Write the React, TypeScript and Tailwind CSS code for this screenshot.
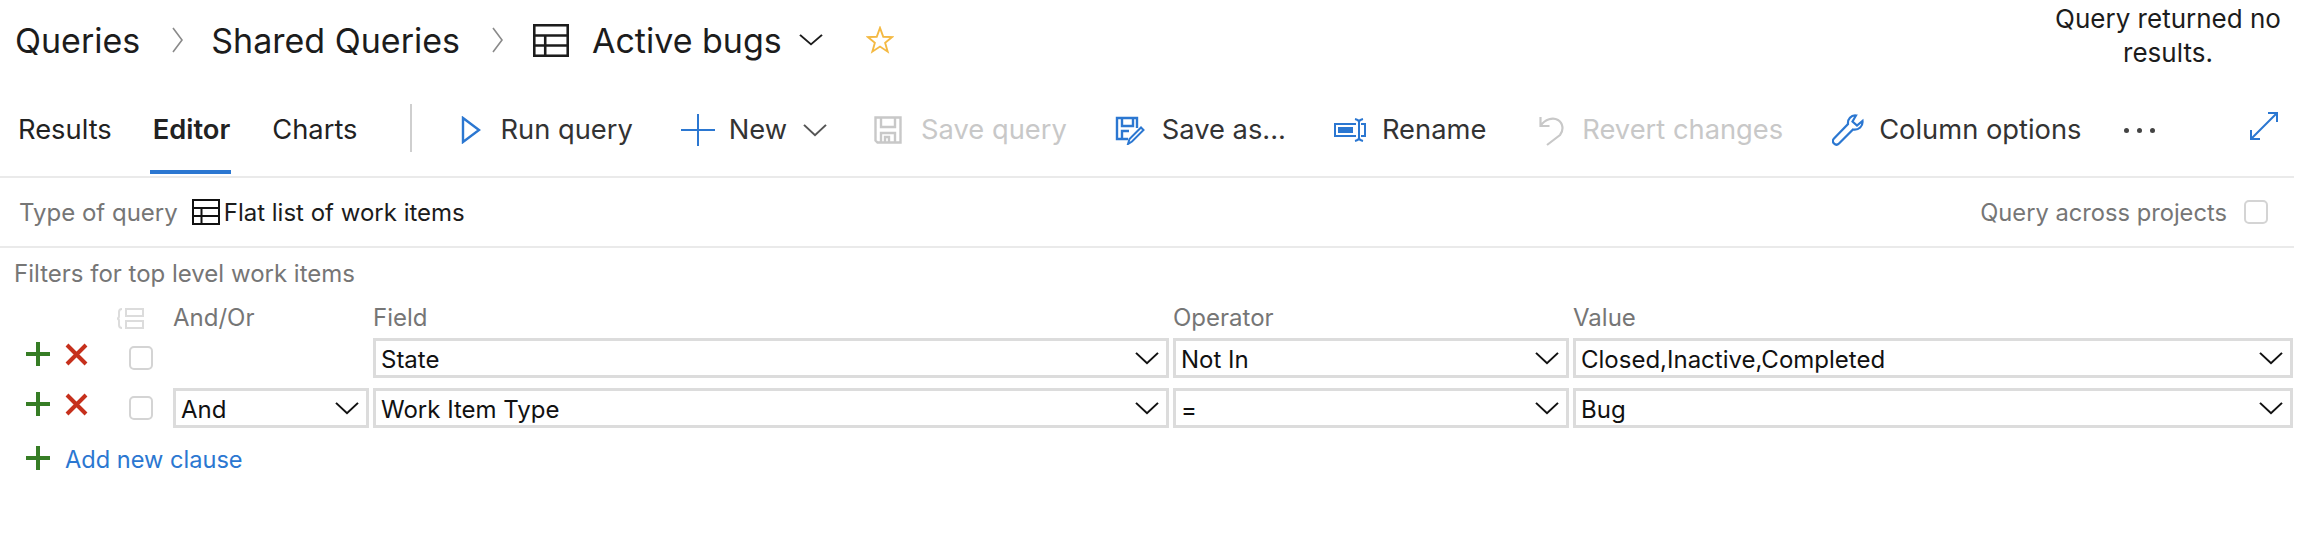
import React from 'react'

const blue = '#2b77d1'

function GridIcon({ className }: { className: string }) {
    return (
        <svg viewBox="0 0 28 26" preserveAspectRatio="none" className={className} fill="none" stroke="currentColor" strokeWidth="2">
            <rect x="1" y="1" width="26" height="24" />
            <path d="M1 9H27M1 17H27M9.5 9V25" />
        </svg>
    )
}

function Chevron({ className }: { className: string }) {
    return (
        <svg viewBox="0 0 24 14" preserveAspectRatio="none" className={className} fill="none" stroke="currentColor" strokeWidth="2">
            <path d="M1 1L12 12L23 1" />
        </svg>
    )
}

function Crumb({ className }: { className: string }) {
    return (
        <svg viewBox="0 0 13 26" className={className} fill="none" stroke="#8a8a8a" strokeWidth="1.6">
            <path d="M2 1L11 13L2 25" />
        </svg>
    )
}

function Plus({ className = '' }: { className?: string }) {
    return (
        <svg viewBox="0 0 24 24" className={`h-6 w-6 shrink-0 ${className}`} fill="none" stroke="#367d25" strokeWidth="4">
            <path d="M12 0V24M0 12H24" />
        </svg>
    )
}

function Cross({ className = '' }: { className?: string }) {
    return (
        <svg viewBox="0 0 23 23" className={`h-[23px] w-[23px] shrink-0 ${className}`} fill="none" stroke="#c6301c" strokeWidth="4">
            <path d="M2 2L21 21M21 2L2 21" />
        </svg>
    )
}

function Checkbox({ className = '' }: { className?: string }) {
    return <div className={`h-6 w-6 shrink-0 rounded-[5px] border-2 border-[#d4d4d4] bg-white ${className}`} />
}

function Select({ value, className }: { value: string; className: string }) {
    return (
        <div className={`flex h-10 items-center justify-between border-[3px] border-[#dcdcdc] bg-white pl-[5px] pr-[7px] text-[#111] ${className}`}>
            <span className="pt-[3px]">{value}</span>
            <Chevron className="h-[13px] w-[24px] text-[#111]" />
        </div>
    )
}

function Tool({ icon, label, disabled, className = '' }: { icon: React.ReactNode; label: string; disabled?: boolean; className?: string }) {
    return (
        <div className={`flex items-center ${disabled ? 'text-[#c8c8c8]' : 'text-[#333]'} ${className}`}>
            {icon}
            <span>{label}</span>
        </div>
    )
}

function FilterRow({ andOr, field, operator, value }: { andOr?: string; field: string; operator: string; value: string }) {
    return (
        <div className="flex h-10 items-center">
            <Plus className="ml-[26px] -mt-[8px]" />
            <Cross className="ml-[15px] -mt-[8px]" />
            <Checkbox className="ml-[41px]" />
            {andOr ? <Select value={andOr} className="ml-[20px] w-[196px]" /> : <div className="ml-[20px] w-[196px]" />}
            <Select value={field} className="ml-[4px] w-[796px]" />
            <Select value={operator} className="ml-[4px] w-[396px]" />
            <Select value={value} className="ml-[4px] w-[720px]" />
        </div>
    )
}

export default function App() {
    return (
        <div className="h-[534px] w-[2322px] overflow-hidden bg-white font-['Inter',sans-serif]">
            {/* header */}
            <div className="flex h-[76px] items-start justify-between pr-[34px]">
                <div className="flex h-[80px] items-center text-[34px] text-[#1c1c1c]">
                    <span className="ml-[15px]">Queries</span>
                    <Crumb className="ml-[31px] h-[26px] w-[13px]" />
                    <span className="ml-[27px]">Shared Queries</span>
                    <Crumb className="ml-[31px] h-[26px] w-[13px]" />
                    <GridIcon className="ml-[29px] h-[33px] w-[36px]" />
                    <span className="ml-[23px]">Active bugs</span>
                    <Chevron className="ml-[17px] h-[12px] w-[24px]" />
                    <svg viewBox="0 0 30 30" className="ml-[43px] h-[28px] w-[28px]" fill="none" stroke="#f4b942" strokeWidth="2">
                        <path d="M15 2L18.5 11.5L28 11.8L20.5 18L23.2 27.5L15 22L6.8 27.5L9.5 18L2 11.8L11.5 11.5Z" />
                    </svg>
                </div>
                <div className="mt-[2px] w-[240px] text-center text-[26px] leading-[34px] text-[#1c1c1c]">Query returned no results.</div>
            </div>

            {/* toolbar */}
            <div className="mr-[28px] flex h-[102px] items-center border-b-[2px] border-[#eaeaea] pt-[8px] text-[27.3px]">
                <div className="flex h-full items-center text-[#222]">
                    <span className="ml-[18px]">Results</span>
                    <div className="relative ml-[41px] flex h-full items-center font-semibold">
                        Editor
                        <div className="absolute -left-[3px] -right-[1px] bottom-[2px] h-1 bg-[#2b77d1]" />
                    </div>
                    <span className="ml-[42px]">Charts</span>
                </div>
                <div className="ml-[53px] -mt-[4px] h-12 w-[2px] bg-[#cfcfcf]" />
                <Tool
                    className="ml-[49px]"
                    label="Run query"
                    icon={
                        <svg viewBox="0 0 20 28" className="mr-[19px] h-[28px] w-[20px]" fill="none" stroke={blue} strokeWidth="2.4">
                            <path d="M2 2L18 14L2 26Z" />
                        </svg>
                    }
                />
                <Tool
                    className="ml-[48px]"
                    label="New"
                    icon={
                        <svg viewBox="0 0 34 32" className="mr-[14px] h-[32px] w-[34px]" fill="none" stroke={blue} strokeWidth="2">
                            <path d="M17 0V32M0 16H34" />
                        </svg>
                    }
                />
                <Chevron className="ml-[16px] h-[13px] w-[24px] text-[#555]" />
                <Tool
                    disabled
                    className="ml-[47px]"
                    label="Save query"
                    icon={
                        <svg viewBox="0 0 28 28" className="mr-[19px] h-[28px] w-[28px]" fill="none" stroke="#c8c8c8" strokeWidth="2.4">
                            <path d="M1.5 1.5H26.5V26.5H3.5L1.5 24.5ZM7 1.5V11H21V1.5M7 26.5V17H21V26.5M11 26.5V21H15V26.5" />
                        </svg>
                    }
                />
                <Tool
                    className="ml-[48px]"
                    label="Save as..."
                    icon={
                        <svg viewBox="0 0 30 29" className="mr-[17px] h-[29px] w-[30px]" fill="none" stroke={blue} strokeWidth="2.4">
                            <path d="M13 23H2V2H22V12M7 2V10H18V2M7 23V15H14" />
                            <path d="M13 28L14.5 23L26 11.5L28.5 14L17 25.5Z" strokeWidth="2" />
                        </svg>
                    }
                />
                <Tool
                    className="ml-[48px]"
                    label="Rename"
                    icon={
                        <svg viewBox="0 0 32 24" className="mr-[16px] h-[24px] w-[32px]" fill="none" stroke={blue} strokeWidth="2">
                            <path d="M22 6H1V18H22M27 6H31V18H27" />
                            <rect x="5" y="10" width="13" height="4" fill={blue} />
                            <path d="M21 1Q25 2 25 4V20Q25 22 21 23M29 1Q25 2 25 4M25 20Q25 22 29 23" />
                        </svg>
                    }
                />
                <Tool
                    disabled
                    className="ml-[53px]"
                    label="Revert changes"
                    icon={
                        <svg viewBox="0 0 25 31" className="mr-[18px] h-[31px] w-[25px]" fill="none" stroke="#c8c8c8" strokeWidth="2.2">
                            <path d="M1.5 2V11H10.5M1.5 11C6 4 14 2 19 5C24 8 25 15 21 20L8 30" />
                        </svg>
                    }
                />
                <Tool
                    className="ml-[49px]"
                    label="Column options"
                    icon={
                        <svg viewBox="0 0 32 32" className="mr-[15px] h-[32px] w-[32px]" fill="none" stroke={blue} strokeWidth="2.2">
                            <path d="M24 1.5C19 1 15.5 5 16 10L2 24.5C0.5 26 0.5 28 2 29.5C3.5 31 5.5 31 7 29.5L21 15.5C27 16.5 31 12 30.5 7L25 11.5L20.5 7.5Z" />
                        </svg>
                    }
                />
                <div className="ml-[43px] flex gap-[8px]">
                    <div className="h-[5px] w-[5px] rounded-full bg-[#444]" />
                    <div className="h-[5px] w-[5px] rounded-full bg-[#444]" />
                    <div className="h-[5px] w-[5px] rounded-full bg-[#444]" />
                </div>
                <svg viewBox="0 0 28 28" className="ml-auto mr-[16px] -mt-[8px] h-[28px] w-[28px]" fill="none" stroke={blue} strokeWidth="2">
                    <path d="M1 27L27 1M18 1H27V10M1 18V27H10" />
                </svg>
            </div>

            {/* type of query */}
            <div className="mr-[28px] flex h-[70px] items-center border-b-[2px] border-[#eaeaea] text-[24px]">
                <span className="ml-[19px] pt-[2px] text-[#767676]">Type of query</span>
                <GridIcon className="ml-[14px] h-[26px] w-7 text-[#111]" />
                <span className="ml-[4px] pt-[2px] text-[#1c1c1c]">Flat list of work items</span>
                <span className="ml-auto pt-[2px] text-[23.7px] text-[#767676]">Query across projects</span>
                <Checkbox className="ml-[17px] mr-[26px]" />
            </div>

            {/* filters */}
            <div className="pt-[13px] text-[24px]">
                <div className="ml-[14px] leading-[26px] text-[#767676]">Filters for top level work items</div>
                <div className="mt-[15px] flex h-[32px] items-center text-[#767676]">
                    <svg viewBox="0 0 28 21" className="ml-[116px] h-[21px] w-[28px]" fill="none" stroke="#dcdcdc" strokeWidth="2">
                        <path d="M6 1Q3 1 3 4V8Q3 10.5 1 10.5Q3 10.5 3 13V17Q3 20 6 20" />
                        <rect x="10" y="1" width="17" height="7" />
                        <rect x="10" y="13" width="17" height="7" />
                    </svg>
                    <span className="ml-[29px] w-[200px]">And/Or</span>
                    <span className="w-[800px]">Field</span>
                    <span className="w-[400px]">Operator</span>
                    <span>Value</span>
                </div>
                <div className="mt-[4px] flex flex-col gap-[10px]">
                    <FilterRow field="State" operator="Not In" value="Closed,Inactive,Completed" />
                    <FilterRow andOr="And" field="Work Item Type" operator="=" value="Bug" />
                </div>
                <div className="mt-[18px] flex h-6 items-center">
                    <Plus className="ml-[26px]" />
                    <span className="ml-[15px] pt-[3px] text-[23.6px] text-[#2b77d1]">Add new clause</span>
                </div>
            </div>
        </div>
    )
}
